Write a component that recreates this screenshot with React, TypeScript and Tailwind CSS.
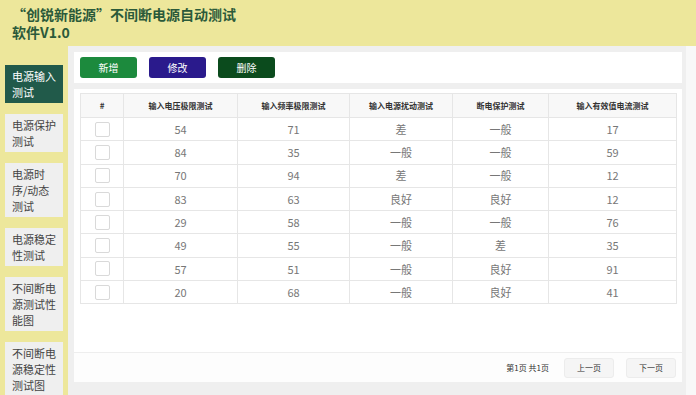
import React from 'react'

const menu = [
  { label: '电源输入测试', active: true },
  { label: '电源保护测试' },
  { label: '电源时序/动态测试' },
  { label: '电源稳定性测试' },
  { label: '不间断电源测试性能图' },
  { label: '不间断电源稳定性测试图' },
]

const headers = ['#', '输入电压极限测试', '输入频率极限测试', '输入电源扰动测试', '断电保护测试', '输入有效值电流测试']
const widths = ['w-[43px]', 'w-[114px]', 'w-[112px]', 'w-[103px]', 'w-[96px]', 'w-[128px]']

const rows = [
  [54, 71, '差', '一般', 17],
  [84, 35, '一般', '一般', 59],
  [70, 94, '差', '一般', 12],
  [83, 63, '良好', '良好', 12],
  [29, 58, '一般', '一般', 76],
  [49, 55, '一般', '差', 35],
  [57, 51, '一般', '良好', 91],
  [20, 68, '一般', '良好', 41],
]

export default function App() {
  return (
    <div className="w-[696px] h-[395px] overflow-hidden flex flex-col bg-white font-['Noto_Sans_CJK_SC','Noto_Sans',sans-serif]">
      {/* title bar */}
      <header className="h-[46px] shrink-0 bg-[#ede79b] pl-[12px] pt-[5px] text-[14px] font-bold text-[#2b5a3a]">
        <div className="leading-[18px]">“创锐新能源”不间断电源自动测试</div>
        <div className="leading-[18px]">软件V1.0</div>
      </header>

      <div className="flex flex-1 min-h-0">
        {/* side menu */}
        <nav className="w-[68px] shrink-0 bg-[#ede79b] pt-[19px] flex flex-col gap-[11px]">
          {menu.map((m) => (
            <div
              key={m.label}
              className={`ml-[5px] w-[58px] pl-[7px] pr-[5px] py-[3px] text-[11px] leading-[16px] shrink-0 ${
                m.active ? 'bg-[#215a4a] text-white' : 'bg-[#efefef] text-[#444]'
              }`}
            >
              {m.label}
            </div>
          ))}
        </nav>

        {/* main */}
        <main className="w-[618px] shrink-0 bg-[#efefef] pl-[6px] pr-[4px] pt-[6px] pb-[13px] flex flex-col gap-[6px]">
          <div className="bg-white h-[31px] flex items-center gap-[12px] px-[6px]">
            <button className="w-[57px] h-[21px] rounded-[3px] bg-[#1c8a3d] text-white text-[10px]">新增</button>
            <button className="w-[57px] h-[21px] rounded-[3px] bg-[#2a1a8c] text-white text-[10px]">修改</button>
            <button className="w-[57px] h-[21px] rounded-[3px] bg-[#0b4b1d] text-white text-[10px]">删除</button>
          </div>

          <div className="bg-white flex-1 flex flex-col">
            <div className="px-[6px] pt-[4px] flex-1">
              <table className="w-[596px] table-fixed border-collapse">
                <thead>
                  <tr className="h-[24px] bg-[#f8f8f8]">
                    {headers.map((h, i) => (
                      <th key={h} className={`${widths[i]} border border-[#e6e6e6] text-[8px] font-semibold text-[#333]`}>
                        {h}
                      </th>
                    ))}
                  </tr>
                </thead>
                <tbody>
                  {rows.map((r, i) => (
                    <tr key={i} className="h-[23.3px]">
                      <td className="border border-[#e6e6e6]">
                        <div className="mx-auto w-[15px] h-[15px] rounded-[2px] border border-[#d9d9d9] bg-white" />
                      </td>
                      {r.map((c, j) => (
                        <td key={j} className="border border-[#e6e6e6] text-center text-[11px] text-[#777]">
                          {c}
                        </td>
                      ))}
                    </tr>
                  ))}
                </tbody>
              </table>
            </div>

            {/* pager */}
            <div className="h-[30px] border-t border-[#eeeeee] flex items-center justify-end pr-[6px] bg-[#fdfdfd]">
              <span className="text-[8px] text-[#333] mr-[15px]">第1页 共1页</span>
              <button className="w-[50px] h-[20px] rounded-[3px] bg-[#f5f5f5] border border-[#ececec] text-[8px] text-[#333]">上一页</button>
              <button className="ml-[12px] w-[50px] h-[20px] rounded-[3px] bg-[#f5f5f5] border border-[#ececec] text-[8px] text-[#333]">下一页</button>
            </div>
          </div>
        </main>

        <div className="flex-1 bg-[#f8f8f8]" />
      </div>
    </div>
  )
}
